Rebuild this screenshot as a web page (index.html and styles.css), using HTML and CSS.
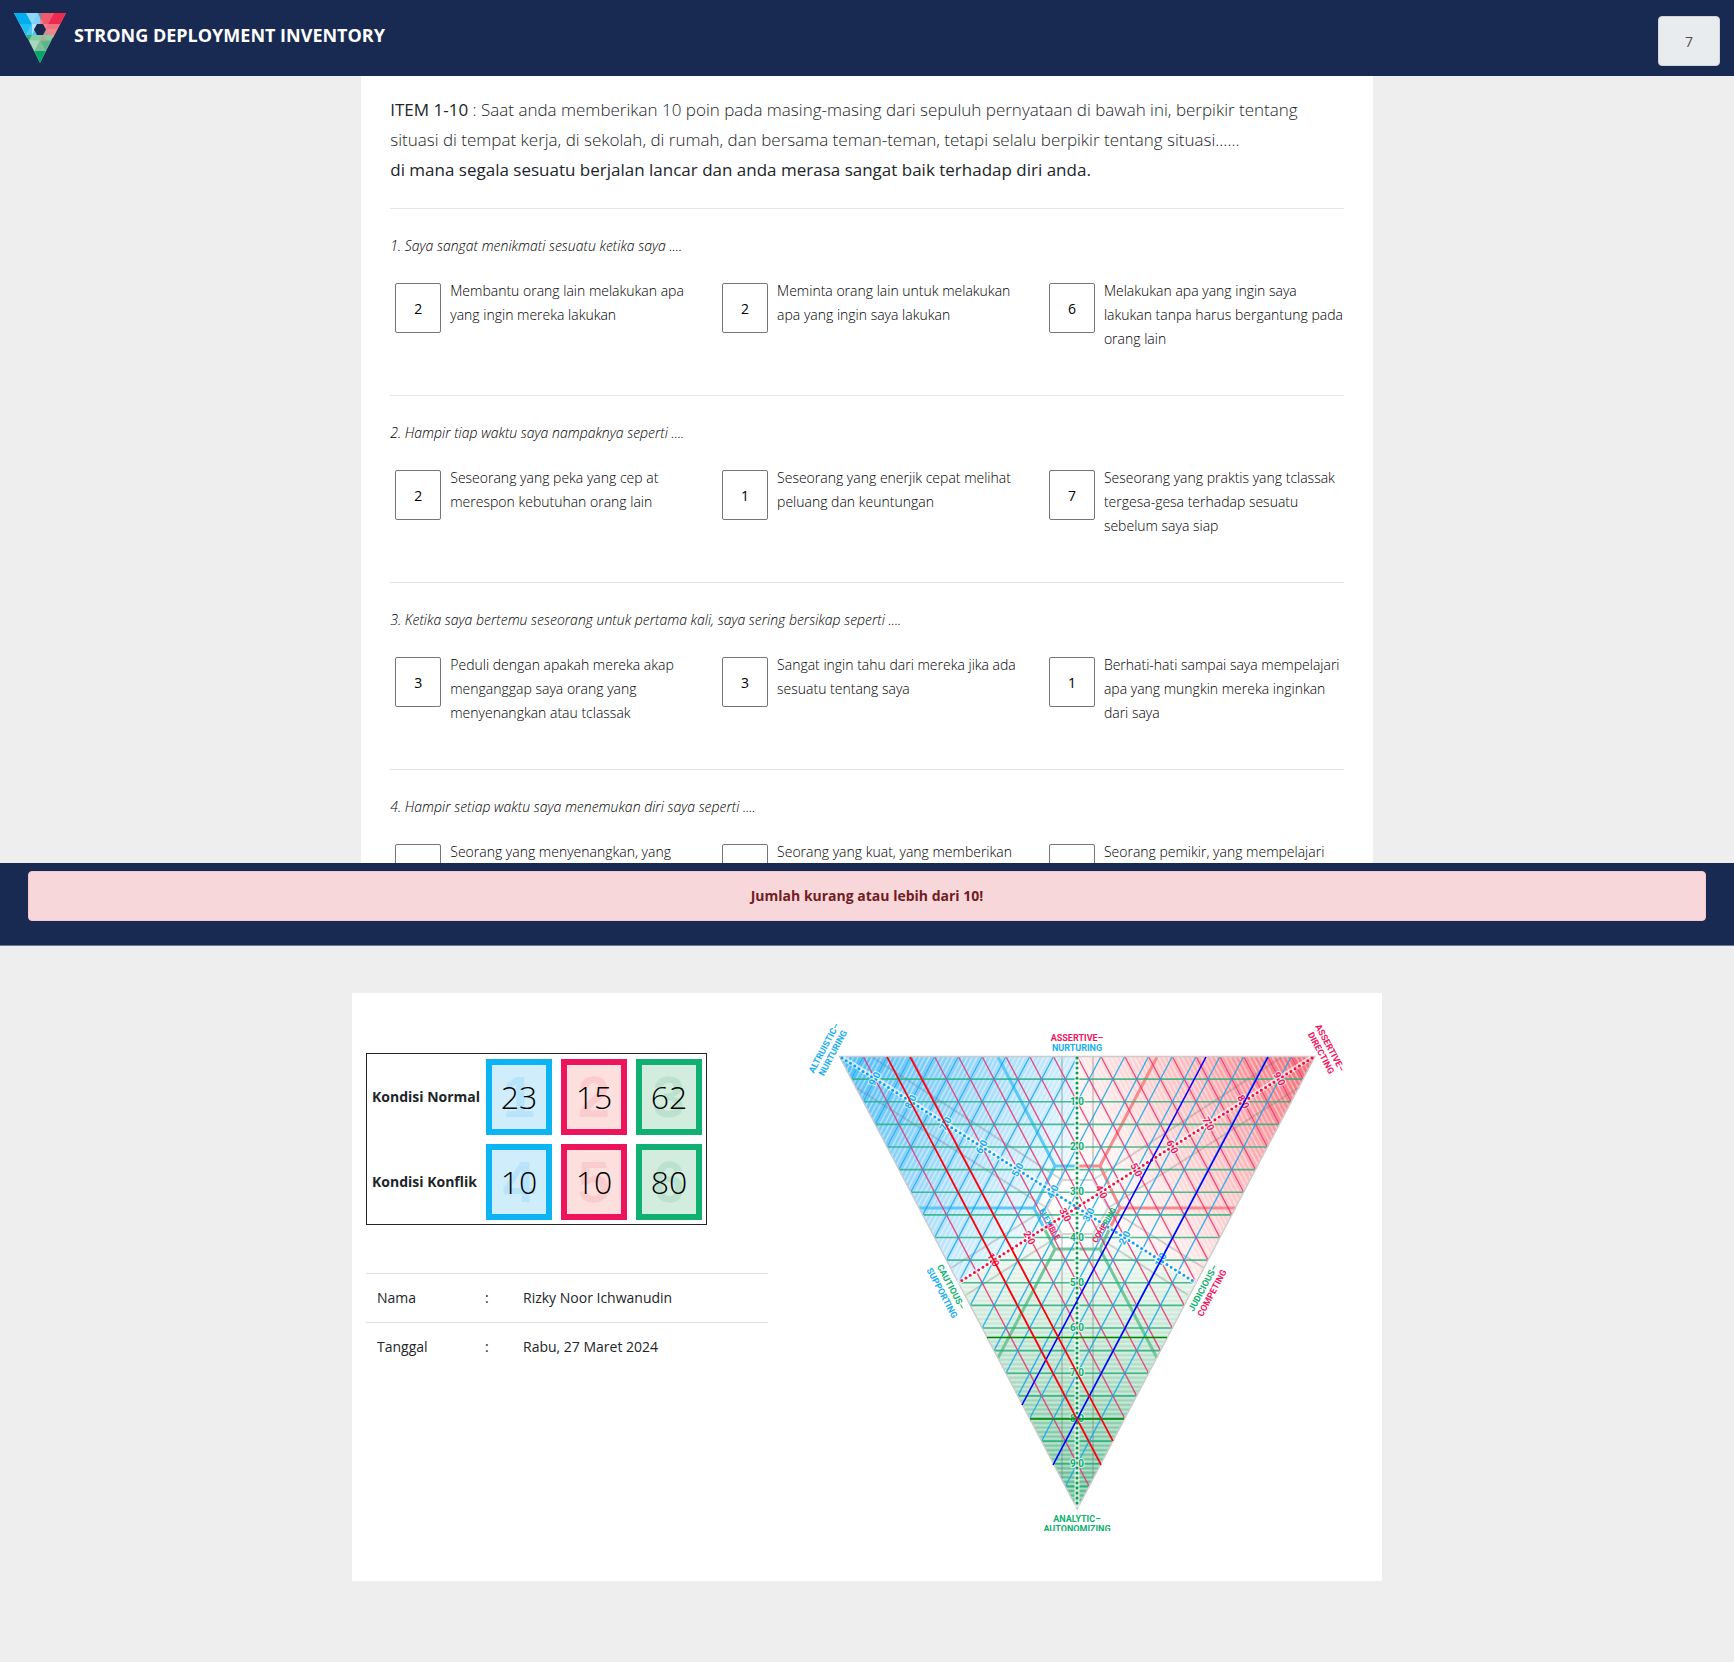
FILE: index.html
```html
<!DOCTYPE html>
<html lang="id">
<head>
<meta charset="utf-8">
<meta name="viewport" content="width=device-width, initial-scale=1">
<title>Strong Deployment Inventory</title>
<link rel="stylesheet" href="styles.css">
</head>
<body>
<header class="topbar">
  <div class="brand">
    <svg class="brand-logo" viewBox="0 0 52 50" width="52" height="50" aria-hidden="true">
      <path fill="#7fd0f7" d="M0 0H26V17L13 25z"/>
      <path fill="#f0858c" d="M52 0H26V17L39 25z"/>
      <path fill="#86cda6" d="M12 22H40L26 50z"/>
      <path fill="#00aeef" d="M0 0H12L18 11H6z"/>
      <path fill="#1fbdf2" d="M6 11H18L12 22z"/>
      <path fill="#4cc6f4" d="M18 11L24 22H12z"/>
      <path fill="#8fd6f8" d="M12 0H24L18 11z"/>
      <path fill="#b5e2fa" d="M18 11H24L20 17L18 22z"/>
      <path fill="#8d7f9c" d="M24 0H28L31 6L27 7z"/>
      <path fill="#ef5a6f" d="M28 0H40L34 11H29L28 6z"/>
      <path fill="#ee2a4f" d="M40 0H52L46 11H34z"/>
      <path fill="#f2727f" d="M34 11H46L43 16H31z"/>
      <path fill="#c9928f" d="M31 15L35 22H28z"/>
      <path fill="#25b67b" d="M12 22H18L15 27.500z"/>
      <path fill="#a9d9bd" d="M15 27.500H26L20.500 38z"/>
      <path fill="#5fb58a" d="M26 27.500H37.500L31.500 38z"/>
      <path fill="#b7ab93" d="M26 27.500L29 22L33 27.500z"/>
      <path fill="#7fbf9a" d="M26 27.500L31.500 38H20.500z"/>
      <path fill="#00a967" d="M20.500 38H31.500L26 50z"/>
      <path fill="#182a52" d="M23 11H29L32 16.500L29 22H23L20 16.500z"/>
    </svg>
    <h1 class="brand-title">STRONG DEPLOYMENT INVENTORY</h1>
  </div>
  <input class="counter" type="text" value="7" readonly aria-label="Jumlah terisi">
</header>

<main class="quiz">
  <form class="quiz-card">
    <p class="lead"><span class="strong">ITEM 1-10</span> : Saat anda memberikan 10 poin pada masing-masing dari sepuluh pernyataan di bawah ini, berpikir tentang situasi di tempat kerja, di sekolah, di rumah, dan bersama teman-teman, tetapi selalu berpikir tentang situasi......<br><span class="strong">di mana segala sesuatu berjalan lancar dan anda merasa sangat baik terhadap diri anda.</span></p>

    <fieldset class="item">
      <legend class="question">1. Saya sangat menikmati sesuatu ketika saya ....</legend>
      <div class="options">
        <div class="option"><input id="q1a" type="text" value="2"><label for="q1a">Membantu orang lain melakukan apa yang ingin mereka lakukan</label></div>
        <div class="option"><input id="q1b" type="text" value="2"><label for="q1b">Meminta orang lain untuk melakukan apa yang ingin saya lakukan</label></div>
        <div class="option"><input id="q1c" type="text" value="6"><label for="q1c">Melakukan apa yang ingin saya lakukan tanpa harus bergantung pada orang lain</label></div>
      </div>
    </fieldset>
    <fieldset class="item">
      <legend class="question">2. Hampir tiap waktu saya nampaknya seperti ....</legend>
      <div class="options">
        <div class="option"><input id="q2a" type="text" value="2"><label for="q2a">Seseorang yang peka yang cep at merespon kebutuhan orang lain</label></div>
        <div class="option"><input id="q2b" type="text" value="1"><label for="q2b">Seseorang yang enerjik cepat melihat peluang dan keuntungan</label></div>
        <div class="option"><input id="q2c" type="text" value="7"><label for="q2c">Seseorang yang praktis yang tclassak tergesa-gesa terhadap sesuatu sebelum saya siap</label></div>
      </div>
    </fieldset>
    <fieldset class="item">
      <legend class="question">3. Ketika saya bertemu seseorang untuk pertama kali, saya sering bersikap seperti ....</legend>
      <div class="options">
        <div class="option"><input id="q3a" type="text" value="3"><label for="q3a">Peduli dengan apakah mereka akap menganggap saya orang yang menyenangkan atau tclassak</label></div>
        <div class="option"><input id="q3b" type="text" value="3"><label for="q3b">Sangat ingin tahu dari mereka jika ada sesuatu tentang saya</label></div>
        <div class="option"><input id="q3c" type="text" value="1"><label for="q3c">Berhati-hati sampai saya mempelajari apa yang mungkin mereka inginkan dari saya</label></div>
      </div>
    </fieldset>
    <fieldset class="item">
      <legend class="question">4. Hampir setiap waktu saya menemukan diri saya seperti ....</legend>
      <div class="options">
        <div class="option"><input id="q4a" type="text"><label for="q4a">Seorang yang menyenangkan, yang</label></div>
        <div class="option"><input id="q4b" type="text"><label for="q4b">Seorang yang kuat, yang memberikan</label></div>
        <div class="option"><input id="q4c" type="text"><label for="q4c">Seorang pemikir, yang mempelajari</label></div>
      </div>
    </fieldset>
  </form>
</main>

<div class="notice">
  <div class="alert" role="alert">Jumlah kurang atau lebih dari 10!</div>
</div>

<section class="result">
  <div class="summary">
    <table class="scores">
      <tr>
        <th scope="row">Kondisi Normal</th>
        <td><div class="score blue" data-n="1"><span>23</span></div></td>
        <td><div class="score pink" data-n="2"><span>15</span></div></td>
        <td><div class="score green" data-n="3"><span>62</span></div></td>
      </tr>
      <tr>
        <th scope="row">Kondisi Konflik</th>
        <td><div class="score blue" data-n="4"><span>10</span></div></td>
        <td><div class="score pink" data-n="5"><span>10</span></div></td>
        <td><div class="score green" data-n="6"><span>80</span></div></td>
      </tr>
    </table>
    <table class="info">
      <tr><td class="key">Nama</td><td class="colon">:</td><td>Rizky Noor Ichwanudin</td></tr>
      <tr><td class="key">Tanggal</td><td class="colon">:</td><td>Rabu, 27 Maret 2024</td></tr>
    </table>
  </div>

  <svg class="triangle" viewBox="0 0 550 516" role="img" aria-label="Segitiga hasil SDI">
    <defs>
      <linearGradient id="gb" gradientUnits="userSpaceOnUse" x1="39" y1="41" x2="300" y2="180">
        <stop offset="0" stop-color="#45bafa"/><stop offset=".4" stop-color="#93d5fb"/><stop offset=".8" stop-color="#e0f3fe"/><stop offset="1" stop-color="#fff"/>
      </linearGradient>
      <linearGradient id="gr" gradientUnits="userSpaceOnUse" x1="515" y1="41" x2="254" y2="180">
        <stop offset="0" stop-color="#f7606c"/><stop offset=".4" stop-color="#fcbcbe"/><stop offset=".75" stop-color="#fef0ef"/><stop offset="1" stop-color="#fff"/>
      </linearGradient>
      <linearGradient id="gg" gradientUnits="userSpaceOnUse" x1="277" y1="494" x2="277" y2="192">
        <stop offset="0" stop-color="#57b98c"/><stop offset=".4" stop-color="#a6d8be"/><stop offset=".8" stop-color="#e6f4ea"/><stop offset="1" stop-color="#fff"/>
      </linearGradient>
      <pattern id="sb" patternUnits="userSpaceOnUse" width=".4" height=".4"><path d="M-.1 .1L.1-.1M0 .4L.4 0M.3 .5L.5 .3" stroke="#fff" stroke-width=".1"/></pattern>
      <pattern id="sr" patternUnits="userSpaceOnUse" width=".4" height=".4"><path d="M-.1 .3L.1 .5M0 0L.4 .4M.3-.1L.5 .1" stroke="#fff" stroke-width=".1"/></pattern>
      <pattern id="sg" patternUnits="userSpaceOnUse" width="4" height=".2"><path d="M0 .1H4" stroke="#fff" stroke-width=".08"/></pattern>
    </defs>

    <path fill="url(#gb)" d="M39.500 41.500H277V192L158 268z"/>
    <path fill="url(#gr)" d="M515 41.500H277V192L396 268z"/>
    <path fill="url(#gg)" d="M158 268L277 192L396 268L277 494z"/>
    <g transform="translate(39.500 41.500) scale(11.8875 22.625)">
      <g opacity=".5">
        <path fill="url(#sb)" d="M0 0H20V6.667L10 10z"/>
        <path fill="url(#sr)" d="M40 0H20V6.667L30 10z"/>
        <path fill="url(#sg)" d="M10 10L20 6.667L30 10L20 20z"/>
      </g>
    </g>

    <path fill="#fff" d="M255 151H300L320 193L300 234H255L234 193z"/>
    <g class="zone zone-gray">
      <path d="M262 165H293L308 193L293 219H262L247 193z"/>
      <path d="M262 42V165M293 42V165M262 219V464M293 219V464"/>
      <path d="M72 42L262 165M55 72L247 193M482 42L293 165M500 72L308 193"/>
      <path d="M247 193L151 253M262 219L166 280M308 193L404 253M293 219L388 280"/>
    </g>
    <g class="zone">
      <path class="z-blue" d="M198 42L255 151H277M255 151L234 193H119M234 193L244 213"/>
      <path class="z-red" d="M357 42L300 151H277M300 151L320 193H436M320 193L310 213"/>
      <path class="z-green" d="M244 213L255 234H300L310 213M255 234L198 343M300 234L357 343"/>
    </g>

    <g transform="translate(39.500 41.500) scale(11.8875 22.625)" class="grid">
      <path class="g-green" d="M1 1H39M2 2H38M3 3H37M4 4H36M5 5H35M6 6H34M7 7H33M8 8H32M9 9H31M10 10H30M11 11H29M12 12H28M13 13H27M14 14H26M15 15H25M16 16H24M17 17H23M18 18H22M19 19H21"/>
      <path class="g-pink" d="M2 0L21 19M4 0L22 18M6 0L23 17M8 0L24 16M10 0L25 15M12 0L26 14M14 0L27 13M16 0L28 12M18 0L29 11M20 0L30 10M22 0L31 9M24 0L32 8M26 0L33 7M28 0L34 6M30 0L35 5M32 0L36 4M34 0L37 3M36 0L38 2M38 0L39 1"/>
      <path class="g-blue" d="M2 0L1 1M4 0L2 2M6 0L3 3M8 0L4 4M10 0L5 5M12 0L6 6M14 0L7 7M16 0L8 8M18 0L9 9M20 0L10 10M22 0L11 11M24 0L12 12M26 0L13 13M28 0L14 14M30 0L15 15M32 0L16 16M34 0L17 17M36 0L18 18M38 0L19 19"/>
      <path class="g-edge" d="M0 0H40L20 20z"/>
    </g>

    <g class="halo"><path d="M277 43V492M43 43L396 268M511 43L158 268"/></g>
    <g class="dots">
      <path class="d-green" d="M277 43V492"/>
      <path class="d-blue" d="M42 43L396 268"/>
      <path class="d-pink" d="M512 43L158 268"/>
    </g>

    <g class="ticks t-green">
      <text x="277" y="90">1 0</text><text x="277" y="135">2 0</text><text x="277" y="180">3 0</text><text x="277" y="226">4 0</text><text x="277" y="271">5 0</text><text x="277" y="316">6 0</text><text x="277" y="361">7 0</text><text x="277" y="407">8 0</text><text x="277" y="452">9 0</text>
    </g>
    <g class="ticks t-blue">
      <text transform="translate(75 64) rotate(-62)" y="3">9 0</text>
      <text transform="translate(111 87) rotate(-62)" y="3">8 0</text>
      <text transform="translate(146 109) rotate(-62)" y="3">7 0</text>
      <text transform="translate(182 132) rotate(-62)" y="3">6 0</text>
      <text transform="translate(218 155) rotate(-62)" y="3">5 0</text>
      <text transform="translate(253 177) rotate(-62)" y="3">4 0</text>
      <text transform="translate(289 200) rotate(-62)" y="3">3 0</text>
      <text transform="translate(325 223) rotate(-62)" y="3">2 0</text>
      <text transform="translate(361 245) rotate(-62)" y="3">1 0</text>
    </g>
    <g class="ticks t-pink">
      <text transform="translate(479 64) rotate(62)" y="3">9 0</text>
      <text transform="translate(443 87) rotate(62)" y="3">8 0</text>
      <text transform="translate(408 109) rotate(62)" y="3">7 0</text>
      <text transform="translate(372 132) rotate(62)" y="3">6 0</text>
      <text transform="translate(336 155) rotate(62)" y="3">5 0</text>
      <text transform="translate(301 177) rotate(62)" y="3">4 0</text>
      <text transform="translate(265 200) rotate(62)" y="3">3 0</text>
      <text transform="translate(229 223) rotate(62)" y="3">2 0</text>
      <text transform="translate(193 245) rotate(62)" y="3">1 0</text>
    </g>

    <g class="result-lines">
      <path stroke="#080" d="M187 322.500H367M230 404H324"/>
      <path stroke="#00f" d="M406 42L222 390M468 42L253 450"/>
      <path stroke="#f00" d="M87 42L301 450M110 42L313 426"/>
    </g>

    <g class="names">
      <text class="t-blue" transform="translate(24 33) rotate(-62)" y="3">ALTRUISTIC–</text>
      <text class="t-blue" transform="translate(33 38) rotate(-62)" y="3">NURTURING</text>
      <text class="t-pink" x="277" y="26">ASSERTIVE–</text>
      <text class="t-blue" x="277" y="36">NURTURING</text>
      <text class="t-pink" transform="translate(530 33) rotate(62)" y="3">ASSERTIVE–</text>
      <text class="t-pink" transform="translate(521 38) rotate(62)" y="3">DIRECTING</text>
      <text class="t-green" transform="translate(151 272) rotate(62)" y="3">CAUTIOUS–</text>
      <text class="t-blue" transform="translate(142 278) rotate(62)" y="3">SUPPORTING</text>
      <text class="t-green" transform="translate(403 273) rotate(-62)" y="3">JUDICIOUS–</text>
      <text class="t-pink" transform="translate(412 278) rotate(-62)" y="3">COMPETING</text>
      <text class="t-green" x="277" y="507">ANALYTIC–</text>
      <text class="t-green" x="277" y="517">AUTONOMIZING</text>
    </g>
    <g class="center-names">
      <text transform="translate(250 209) rotate(60)" y="3"><tspan class="t-blue">FLEX</tspan><tspan class="t-pink">IBLE</tspan></text>
      <text transform="translate(304 210) rotate(-60)" y="3"><tspan class="t-pink">COHE</tspan><tspan class="t-green">RING</tspan></text>
    </g>
  </svg>
</section>
</body>
</html>
```
FILE: styles.css
```css
* { box-sizing: border-box; }

body {
  margin: 0;
  background: #eee;
  color: #212529;
  font-family: "Open Sans", "Noto Sans", sans-serif;
  font-size: 14px;
  line-height: 24px;
}

/* Header */
.topbar {
  display: flex;
  justify-content: space-between;
  align-items: flex-start;
  height: 76px;
  padding: 13px 14px 0 14px;
  background: #182a52;
}
.brand { display: flex; gap: 8px; }
.brand-title {
  margin: 8px 0 0;
  color: #fff;
  font-size: 18px;
  font-weight: 700;
  line-height: 28px;
}
.counter {
  width: 62px;
  height: 50px;
  margin-top: 3px;
  border: 1px solid #ced4da;
  border-radius: 4px;
  background: #e9ecef;
  color: #495057;
  font: inherit;
  text-align: center;
}

/* Questionnaire */
.quiz {
  height: 787px;
  overflow: hidden;
}
.quiz-card {
  width: 58.3333%;
  margin: 0 auto;
  padding: 19px 29px 40px;
  background: #fff;
}
.lead {
  margin: 0 0 23px;
  font-size: 17px;
  font-weight: 300;
  line-height: 30px;
}
.strong { font-weight: 400; }
.item {
  min-width: 0;
  min-height: 187px;
  margin: 0;
  padding: 25px 0 0;
  border: 0;
  border-top: 1px solid #e5e5e5;
}
.question {
  float: left;
  width: 100%;
  padding: 0;
  font-style: italic;
  font-weight: 300;
}
.options {
  clear: both;
  display: grid;
  grid-template-columns: repeat(3, 1fr);
  gap: 27px;
  padding-top: 21px;
}
.option {
  display: flex;
  align-items: flex-start;
  gap: 9px;
  padding-left: 5px;
}
.option input {
  flex: none;
  width: 46px;
  height: 50px;
  margin: 4px 0 0;
  padding: 0;
  border: 1px solid #767676;
  border-radius: 2px;
  background: #fff;
  color: #000;
  font: inherit;
  text-align: center;
}
.option label { font-weight: 300; }
.question, .option label { color: #000; }

/* Notice bar */
.notice {
  height: 83px;
  padding: 8px 28px 0;
  border-bottom: 1px solid #6c7a90;
  background: #182a52;
}
.alert {
  padding: 12px 20px;
  border: 1px solid #f5c6cb;
  border-radius: 4px;
  background: #f8d7da;
  color: #721c24;
  font-weight: 700;
  text-align: center;
}

/* Result */
.result {
  display: flex;
  align-items: flex-start;
  justify-content: space-between;
  width: 59.4%;
  margin: 47px auto 82px;
  padding: 22px 32px 50px 14px;
  background: #fff;
}
.summary { width: 402px; padding-top: 38px; }
.scores {
  border: 1px solid #212529;
  border-collapse: separate;
  border-spacing: 0;
}
.scores th {
  width: 114px;
  padding: 0 0 0 5px;
  font-weight: 700;
  text-align: left;
  white-space: nowrap;
}
.scores td { padding: 5px 4px 4px 5px; }
.score {
  display: grid;
  place-items: center;
  width: 66px;
  height: 76px;
  border: 6px solid;
  font-size: 32px;
  font-weight: 300;
  line-height: 40px;
}
.score > span, .score::before { grid-area: 1 / 1; }
.score > span { position: relative; color: #000; }
.score::before {
  content: attr(data-n);
  font: 700 58px/64px "Liberation Sans", Arial, sans-serif;
}
.score.blue { border-color: #0cb4f4; background: #d0edfc; }
.score.blue::before { color: #b8e4fb; }
.score.pink { border-color: #ee145c; background: #fddfde; }
.score.pink::before { color: #fbcccd; }
.score.green { border-color: #0fb072; background: #d2ecde; }
.score.green::before { color: #bce2cf; }

.info {
  width: 100%;
  margin-top: 48px;
  border-collapse: collapse;
}
.info td {
  height: 49px;
  padding: 0;
  border-top: 1px solid #dee2e6;
}
.info .key { width: 119px; padding-left: 11px; }
.info .colon { width: 38px; }

/* Triangle chart */
.triangle { display: block; width: 550px; height: 516px; overflow: hidden; }
.zone { fill: none; stroke-width: 3; }
.zone-gray { stroke: #777; stroke-width: 2; opacity: .3; }
.z-blue { stroke: #5cc8f6; }
.z-red { stroke: #f68a8c; }
.z-green { stroke: #74c79c; }
.grid path { fill: none; stroke-width: 1.4; vector-effect: non-scaling-stroke; }
.grid .g-green { stroke: #23b07a; stroke-width: 1.6; opacity: .8; }
.grid .g-pink { stroke: #e8346f; opacity: .85; }
.grid .g-blue { stroke: #18a8ec; opacity: .85; }
.grid .g-edge { stroke: #ccc; }
.halo path { fill: none; stroke: #fff; stroke-width: 5; opacity: .65; }
.dots path { fill: none; stroke-width: 3; stroke-linecap: round; stroke-dasharray: 0 5; }
.d-green { stroke: #0c9a4a; }
.d-blue { stroke: #129ff0; }
.d-pink { stroke: #ea1240; }
.ticks text, .names text, .center-names text {
  font-family: Roboto, "Liberation Sans", sans-serif;
  font-weight: 700;
  text-anchor: middle;
}
.ticks text {
  font-size: 10px;
  stroke: #fff;
  stroke-opacity: .7;
  stroke-width: 2;
  paint-order: stroke;
}
.names text { font-size: 9px; }
.center-names text { font-size: 8px; }
.t-blue { fill: #16aef0; }
.t-pink { fill: #ee1762; }
.t-green { fill: #11b070; }
.result-lines path { fill: none; stroke-width: 1.6; }
```
